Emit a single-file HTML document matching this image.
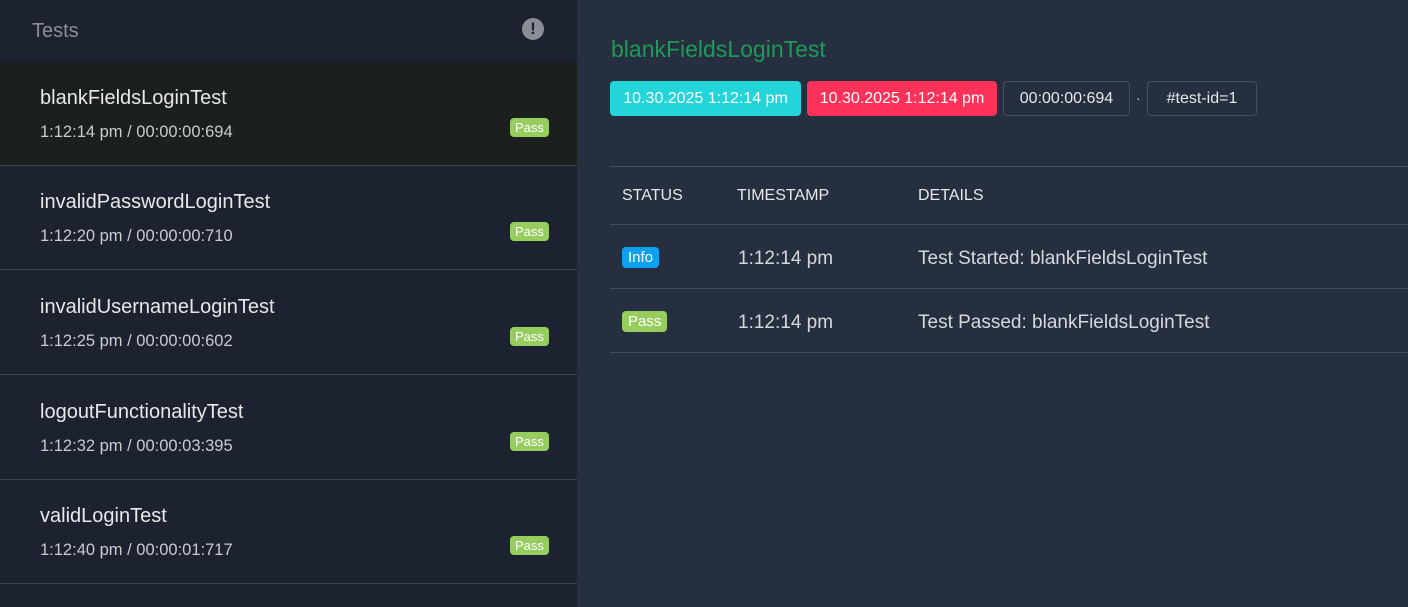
<!DOCTYPE html>
<html><head><meta charset="utf-8"><style>
*{margin:0;padding:0;box-sizing:border-box}
body{width:1408px;height:607px;overflow:hidden;background:#252f3f;font-family:"Liberation Sans",sans-serif;position:relative}
.side{position:absolute;left:0;top:0;width:577px;height:607px;background:#1c2230}
.hdr{height:62px;position:relative}
.hdr .t{position:absolute;left:32px;top:20px;font-size:20px;color:#8a8f98}
.hdr .ic{position:absolute;left:522px;top:18px;width:22px;height:22px;border-radius:50%;background:#8a8e95;color:#1c2230;font-weight:bold;font-size:17px;text-align:center;line-height:22px}
.item{position:absolute;left:0;width:577px;height:104px;border-bottom:1px solid #3c424d}
.item .n{position:absolute;left:40px;top:25px;font-size:20px;color:#e8e8e8}
.item .m{position:absolute;left:40px;top:61px;font-size:16.5px;color:#c9cbcf}
.pass{display:inline-block;background:#97cd5f;color:#fff;font-size:13px;border-radius:4px;padding:2px 5px}
.item .pass{position:absolute;left:510px;top:56px}
.main{position:absolute;left:577px;top:0;right:0;bottom:0}
h1{position:absolute;left:34px;top:36px;font-size:23px;font-weight:normal;color:#1f9a58}
.b{position:absolute;top:81px;height:35px;border-radius:4px;font-size:16px;color:#fff;line-height:35px;text-align:center}
.line{position:absolute;left:33px;right:0;height:1px;background:#444b56}
.th{position:absolute;top:187px;font-size:16px;color:#e8e8e8}
.td{position:absolute;font-size:19px;color:#d6d8dc}
</style></head><body>
<div class="side">
<div class="hdr"><span class="t">Tests</span><span class="ic">!</span></div>
<div class="item" style="top:62px;background:#1b201e"><span class="n">blankFieldsLoginTest</span><span class="m">1:12:14 pm / 00:00:00:694</span><span class="pass">Pass</span></div>
<div class="item" style="top:166px"><span class="n">invalidPasswordLoginTest</span><span class="m">1:12:20 pm / 00:00:00:710</span><span class="pass">Pass</span></div>
<div class="item" style="top:271px"><span class="n">invalidUsernameLoginTest</span><span class="m">1:12:25 pm / 00:00:00:602</span><span class="pass">Pass</span></div>
<div class="item" style="top:376px"><span class="n">logoutFunctionalityTest</span><span class="m">1:12:32 pm / 00:00:03:395</span><span class="pass">Pass</span></div>
<div class="item" style="top:480px"><span class="n">validLoginTest</span><span class="m">1:12:40 pm / 00:00:01:717</span><span class="pass">Pass</span></div>
</div>
<div class="main">
<h1>blankFieldsLoginTest</h1>
<div class="b" style="left:33px;width:191px;background:#23d5d8">10.30.2025 1:12:14 pm</div>
<div class="b" style="left:230px;width:190px;background:#fe3259">10.30.2025 1:12:14 pm</div>
<div class="b" style="left:426px;width:127px;border:1px solid #4a505b;color:#e8e8e8;line-height:33px">00:00:00:694</div>
<div style="position:absolute;left:559px;top:90px;color:#ccc;font-size:14px">·</div>
<div class="b" style="left:570px;width:110px;border:1px solid #4a505b;color:#e8e8e8;line-height:33px">#test-id=1</div>
<div class="line" style="top:166px"></div>
<div class="th" style="left:45px">STATUS</div>
<div class="th" style="left:160px">TIMESTAMP</div>
<div class="th" style="left:341px">DETAILS</div>
<div class="line" style="top:224px"></div>
<div style="position:absolute;left:45px;top:247px;background:#0da2f0;color:#fff;font-size:15px;border-radius:4px;padding:2px 6px">Info</div>
<div class="td" style="left:161px;top:248px">1:12:14 pm</div>
<div class="td" style="left:341px;top:248px">Test Started: blankFieldsLoginTest</div>
<div class="line" style="top:288px"></div>
<div class="pass" style="position:absolute;left:45px;top:311px;font-size:15px;padding:2px 6px;border-radius:4px">Pass</div>
<div class="td" style="left:161px;top:312px">1:12:14 pm</div>
<div class="td" style="left:341px;top:312px">Test Passed: blankFieldsLoginTest</div>
<div class="line" style="top:352px"></div>
</div>
</body></html>
